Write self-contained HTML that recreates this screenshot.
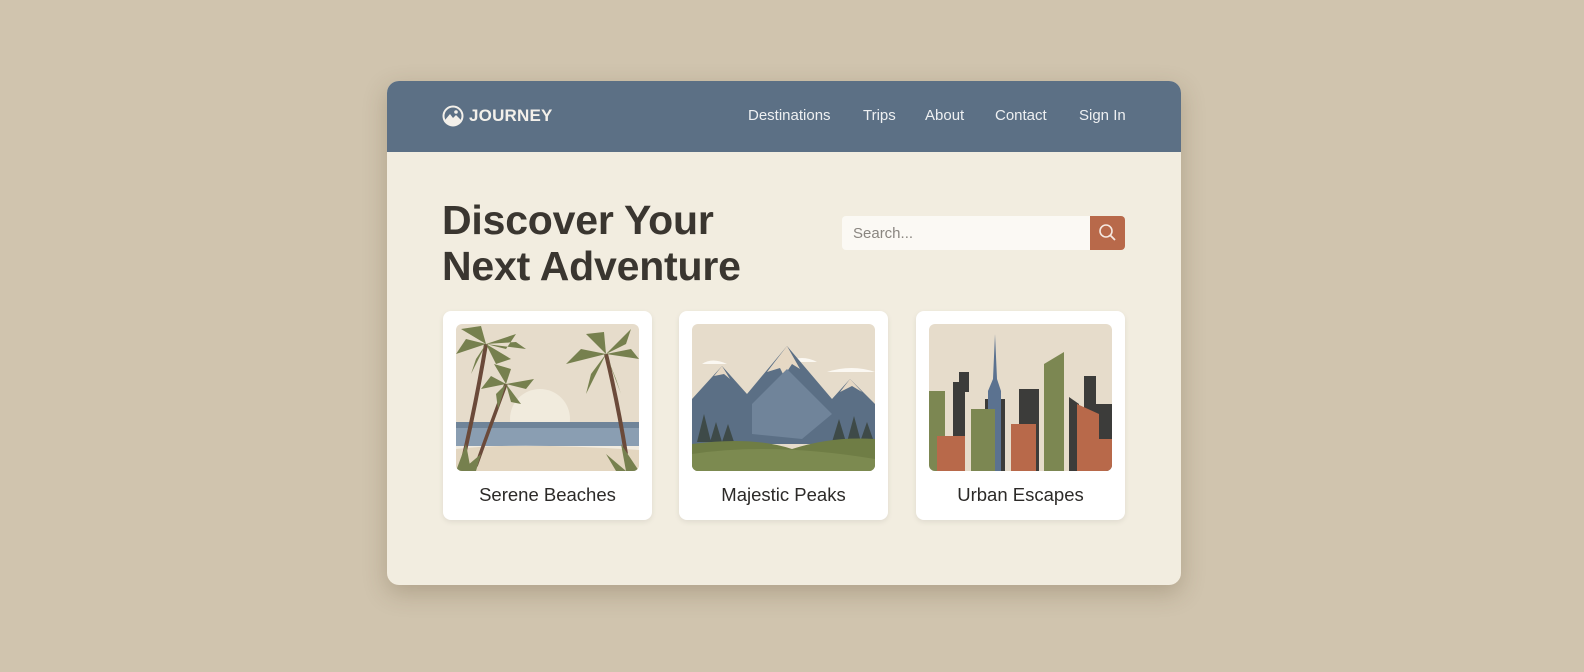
<!DOCTYPE html>
<html><head><meta charset="utf-8"><style>
*{margin:0;padding:0;box-sizing:border-box}
body{width:1584px;height:672px;background:#d0c4ae;font-family:"Liberation Sans",sans-serif;position:relative;overflow:hidden}
.win{position:absolute;left:387px;top:81px;width:794px;height:504px;background:#f2ede0;border-radius:12px;overflow:hidden;box-shadow:0 8px 24px rgba(80,60,30,.25)}
.hdr{position:absolute;left:0;top:0;width:794px;height:71px;background:#5c7085}
.logo{position:absolute;left:55px;top:24px;display:flex;align-items:center;color:#f3f0ea;font-weight:bold;font-size:17px;letter-spacing:.2px}
.logo svg{margin-right:5px}
.nav{position:absolute;top:26px;font-size:15px;color:#eef0f2}
h1{position:absolute;left:55px;top:116px;font-size:41px;line-height:46px;color:#3a3630;font-weight:bold;letter-spacing:-.2px}
.search{position:absolute;left:455px;top:135px;width:249px;height:34px;background:#fbf9f4;border-radius:4px 0 0 4px;font-size:15px;color:#8a8680;padding:9px 11px}
.btn{position:absolute;left:703px;top:135px;width:35px;height:34px;background:#b8694a;border-radius:0 4px 4px 0}
.card{position:absolute;top:230px;width:209px;height:209px;background:#fff;border-radius:8px;box-shadow:0 2px 6px rgba(0,0,0,.08)}
.card svg{position:absolute;left:13px;top:13px;border-radius:6px}
.card div{position:absolute;left:0;right:0;top:173px;text-align:center;font-size:18.5px;color:#2c2a28}
</style></head><body>
<div class="win">
<div class="hdr">
<div class="logo"><svg width="22" height="22" viewBox="0 0 22 22"><circle cx="11" cy="11" r="9.5" fill="none" stroke="#f3f0ea" stroke-width="2"/><path d="M3 15 L8 9 L11 13 L14 10 L19 15 A9 9 0 0 1 3 15Z" fill="#f3f0ea"/><circle cx="14" cy="7" r="1.8" fill="#f3f0ea"/></svg>JOURNEY</div>
<div class="nav" style="left:361px">Destinations</div>
<div class="nav" style="left:476px">Trips</div>
<div class="nav" style="left:538px">About</div>
<div class="nav" style="left:608px">Contact</div>
<div class="nav" style="left:692px">Sign In</div>
</div>
<h1>Discover Your<br>Next Adventure</h1>
<div class="search">Search...</div>
<div class="btn"><svg width="35" height="34" viewBox="0 0 35 34"><circle cx="16" cy="15" r="6" fill="none" stroke="#f5e8e0" stroke-width="1.6"/><path d="M20.5 19.5 L25 24" stroke="#f5e8e0" stroke-width="1.8"/></svg></div>

<div class="card" style="left:56px"><svg width="183" height="147" viewBox="0 0 183 147">
<rect width="183" height="147" fill="#e6dccb"/>
<circle cx="84" cy="95" r="30" fill="#f1ebdd"/>
<rect y="98" width="183" height="24" fill="#8a9eb2"/>
<rect y="98" width="183" height="6" fill="#6f8499"/>
<path d="M0 122 H183 V147 H0Z" fill="#e3d6c0"/>
<path d="M0 125 Q60 118 183 126 V122 H0Z" fill="#f2ece0"/>
<path d="M6 140 Q20 80 30 20" stroke="#6b4a3a" stroke-width="4" fill="none"/>
<path d="M20 142 Q35 100 50 60" stroke="#6b4a3a" stroke-width="3.5" fill="none"/>
<path d="M170 130 Q162 80 150 30" stroke="#6b4a3a" stroke-width="4" fill="none"/>
<g fill="#76804e">
<path d="M30 20 L0 30 L10 15Z M30 20 L5 5 L25 2Z M30 20 L60 10 L50 25Z M30 20 L55 35 L40 40Z M30 20 L15 50 L20 35Z M30 20 L70 25 L60 18Z"/>
<path d="M50 60 L25 65 L35 52Z M50 60 L38 40 L55 45Z M50 60 L78 55 L70 65Z M50 60 L65 80 L55 78Z M50 60 L42 85 L40 70Z"/>
<path d="M150 30 L110 40 L125 25Z M150 30 L130 10 L148 8Z M150 30 L175 5 L170 20Z M150 30 L183 35 L175 25Z M150 30 L165 70 L160 55Z M150 30 L130 70 L135 50Z"/>
<path d="M0 147 L10 120 L15 147Z M5 147 L25 130 L20 147Z M183 147 L165 120 L170 147Z M170 147 L150 130 L160 147Z"/>
</g></svg><div>Serene Beaches</div></div>

<div class="card" style="left:292px"><svg width="183" height="147" viewBox="0 0 183 147">
<rect width="183" height="147" fill="#e6dccb"/>
<path d="M10 40 Q20 33 35 40Z M95 38 Q110 30 125 38Z M135 48 Q160 40 183 48Z" fill="#fbf8f2"/>
<path d="M0 75 L30 42 L55 70 L95 22 L140 75 L158 55 L183 80 V120 H0Z" fill="#5b6f85"/>
<path d="M30 42 L22 52 L32 50 L38 55Z M95 22 L75 48 L88 44 L92 52 L100 40 L108 45Z M158 55 L148 68 L160 62 L170 68Z" fill="#e6d8c4"/>
<path d="M60 80 L95 45 L140 90 L110 115 L60 110Z" fill="#70849a"/>
<g fill="#3e4a48"><path d="M5 118 L12 90 L19 118Z M18 118 L24 98 L30 118Z M30 118 L36 100 L42 118Z M140 118 L147 95 L154 118Z M155 118 L162 92 L169 118Z M168 118 L175 98 L182 118Z"/></g>
<path d="M0 120 Q60 112 100 125 Q140 112 183 115 V147 H0Z" fill="#6f7d45"/>
<path d="M0 130 Q80 118 183 135 V147 H0Z" fill="#7c8a50"/>
</svg><div>Majestic Peaks</div></div>

<div class="card" style="left:529px"><svg width="183" height="147" viewBox="0 0 183 147">
<rect width="183" height="147" fill="#e6dccb"/>
<rect x="24" y="58" width="12" height="89" fill="#3c3c3a"/><rect x="30" y="48" width="10" height="20" fill="#3c3c3a"/>
<rect x="0" y="67" width="16" height="80" fill="#7c8752"/>
<rect x="56" y="75" width="20" height="72" fill="#3c3c3a"/>
<path d="M59 67 L64 55 L66 10 L68 55 L72 67 V147 H59Z" fill="#5b7290"/>
<rect x="90" y="65" width="20" height="82" fill="#3c3c3a"/>
<path d="M115 40 L135 28 V147 H115Z" fill="#7c8752"/>
<rect x="155" y="52" width="12" height="95" fill="#3c3c3a"/><rect x="165" y="80" width="18" height="67" fill="#3c3c3a"/>
<path d="M140 73 L150 80 V147 H140Z" fill="#3c3c3a"/>
<path d="M148 80 L170 90 V147 H148Z" fill="#b8694a"/>
<rect x="42" y="85" width="24" height="62" fill="#7c8752"/>
<rect x="8" y="112" width="28" height="35" fill="#b8694a"/>
<rect x="82" y="100" width="25" height="47" fill="#b8694a"/>
<rect x="170" y="115" width="13" height="32" fill="#b8694a"/>
</svg><div>Urban Escapes</div></div>
</div>
</body></html>
